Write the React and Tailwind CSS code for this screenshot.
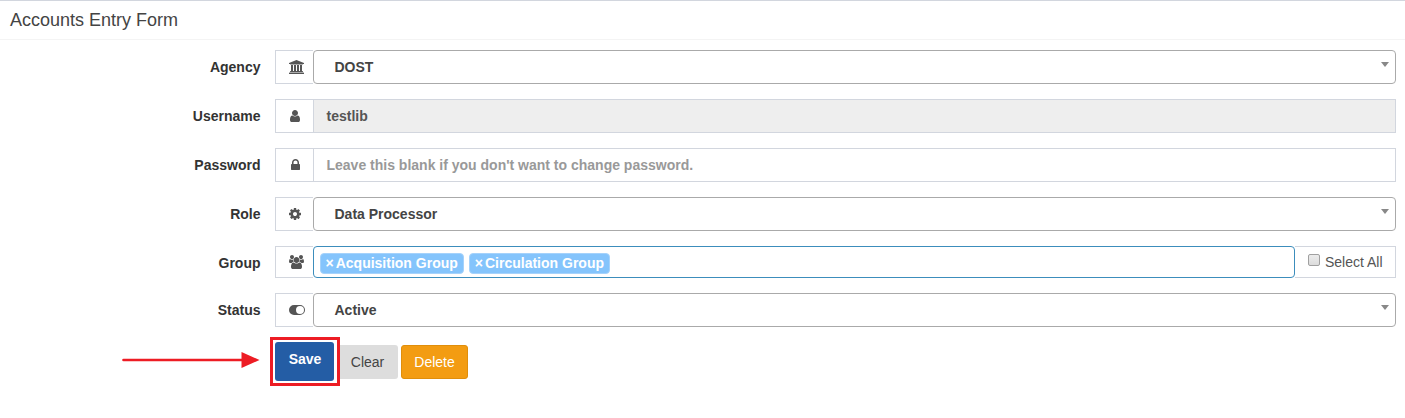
import React from 'react';

const PATHS = {
  university: {
    box: '0 0 1920 1792',
    w: 15,
    d: 'M960 0l960 384v128h-128q0 26-20.5 45t-48.5 19h-1526q-28 0-48.5-19t-20.5-45h-128v-128zM256 640h256v768h128v-768h256v768h128v-768h256v768h128v-768h256v768h59q28 0 48.5 19t20.5 45v64h-1664v-64q0-26 20.5-45t48.5-19h59v-768zM1851 1600q28 0 48.5 19t20.5 45v128h-1920v-128q0-26 20.5-45t48.5-19h1782z',
  },
  user: {
    box: '256 0 1280 1792',
    w: 10,
    d: 'M1536 1399q0 109-62.5 187t-150.5 78h-854q-88 0-150.5-78t-62.5-187q0-85 8.5-160.5t31.5-152 58.5-131 94-89 134.5-34.5q131 128 313 128t313-128q76 0 134.5 34.5t94 89 58.5 131 31.5 152 8.5 160.5zm-256-887q0 159-112.5 271.5t-271.5 112.5-271.5-112.5-112.5-271.5 112.5-271.5 271.5-112.5 271.5 112.5 112.5 271.5z',
  },
  lock: {
    box: '320 0 1152 1792',
    w: 9,
    d: 'M640 768h512v-192q0-106-75-181t-181-75-181 75-75 181v192zm832 96v576q0 40-28 68t-68 28h-960q-40 0-68-28t-28-68v-576q0-40 28-68t68-28h32v-192q0-184 132-316t316-132 316 132 132 316v192h32q40 0 68 28t28 68z',
  },
  cog: {
    box: '128 0 1536 1792',
    w: 12,
    d: 'M1152 896q0-106-75-181t-181-75-181 75-75 181 75 181 181 75 181-75 75-181zm512-109v222q0 12-8 23t-20 13l-185 28q-19 54-39 91 35 50 107 138 10 12 10 25t-9 23q-27 37-99 108t-94 71q-12 0-26-9l-138-108q-44 23-91 38-16 136-29 186-7 28-36 28h-222q-14 0-24.5-8.5t-11.5-21.5l-28-184q-49-16-90-37l-141 107q-10 9-25 9-14 0-25-11-126-114-165-168-7-10-7-23 0-12 8-23 15-21 51-66.5t54-70.5q-27-50-41-99l-183-27q-13-2-21-12.5t-8-23.5v-222q0-12 8-23t19-13l186-28q14-46 39-92-40-57-107-138-10-12-10-24 0-10 9-23 26-36 98.5-107.5t94.5-71.5q13 0 26 10l138 107q44-23 91-38 16-136 29-186 7-28 36-28h222q14 0 24.5 8.5t11.5 21.5l28 184q49 16 90 37l142-107q9-9 24-9 13 0 25 10 129 119 165 170 7 8 7 22 0 12-8 23-15 21-51 66.5t-54 70.5q26 50 41 98l183 28q13 2 21 12.5t8 23.5z',
  },
  users: {
    box: '-64 0 1920 1792',
    w: 15,
    d: 'M529 896q-162 5-265 128h-134q-82 0-138-40.5t-56-118.5q0-353 124-353 6 0 43.5 21t97.5 42.5 119 21.5q67 0 133-23-5 37-5 66 0 159 81 256zm1071 637q0 120-73 189.5t-194 69.5h-874q-121 0-194-69.5t-73-189.5q0-53 3.5-103.5t14-109 26.5-108.5 43-97.5 62-81 85.5-53.5 111.5-20q10 0 43 21.5t73 48 107 48 135 21.5 135-21.5 107-48 73-48 43-21.5q61 0 111.5 20t85.5 53.5 62 81 43 97.5 26.5 108.5 14 109 3.5 103.5zm-1024-1277q0 106-75 181t-181 75-181-75-75-181 75-181 181-75 181 75 75 181zm704 384q0 159-112.5 271.5t-271.5 112.5-271.5-112.5-112.5-271.5 112.5-271.5 271.5-112.5 271.5 112.5 112.5 271.5zm576 225q0 78-56 118.5t-138 40.5h-134q-103-123-265-128 81-97 81-256 0-29-5-66 66 23 133 23 59 0 119-21.5t97.5-42.5 43.5-21q124 0 124 353zm-128-609q0 106-75 181t-181 75-181-75-75-181 75-181 181-75 181 75 75 181z',
  },
  toggle: {
    box: '0 0 2048 1792',
    w: 16,
    d: 'M640 256h768a640 640 0 0 1 0 1280h-768a640 640 0 0 1 0-1280zM1408 384a512 512 0 1 0 0 1024a512 512 0 1 0 0-1024z',
  },
};

function Icon({ name }) {
  const { box, w, d } = PATHS[name];
  return (
    <svg width={w} height="14" viewBox={box} fill="#555" fillRule="evenodd" className={w > 14 ? 'ml-[0.6px] block shrink-0' : 'block shrink-0'}>
      <path d={d} />
    </svg>
  );
}

function Row({ label, icon, children, short }) {
  return (
    <div className={short ? 'flex h-8' : 'flex h-[34px]'}>
      <div className={short ? 'flex w-[260.5px] shrink-0 items-center justify-end pt-0.5 font-bold text-[#333]' : 'flex w-[260.5px] shrink-0 items-center justify-end font-bold text-[#333]'}>{label}</div>
      <div className="ml-[14.5px] flex w-[38px] shrink-0 items-center border border-r-0 border-[#d2d6de] pl-3">
        <span className="flex min-w-[14px] justify-center"><Icon name={icon} /></span>
      </div>
      {children}
    </div>
  );
}

function Select({ value }) {
  return (
    <div className="flex flex-1 justify-between rounded-[4px] border border-[#aaa] pr-1.5 pl-[20.5px]">
      <span className="self-center font-bold text-[#444]">{value}</span>
      <svg width="8" height="5" viewBox="0 0 8 5" className="mt-[11px]"><path d="M0 0h8l-4 5z" fill="#888" /></svg>
    </div>
  );
}

function Tag({ children }) {
  return (
    <span className="flex h-[21px] items-center rounded-[4px] border border-[#a5d2fb] bg-[#84c4fc] px-[5px] font-bold text-white">
      <span className="mr-0.5">×</span>
      {children}
    </span>
  );
}

export default function App() {
  return (
    <div className="h-[418px] overflow-hidden border-t border-[#d2d6de] bg-white font-['Liberation_Sans',Arial,sans-serif] text-[14px] leading-5">
      <header className="flex h-[39px] items-center border-b border-[#f4f4f4] pl-2.5 text-[18px] text-[#444]">Accounts Entry Form</header>
      <form className="flex flex-col gap-[15px] pt-2.5 pr-[9px]">
        <Row label="Agency" icon="university"><Select value="DOST" /></Row>
        <Row label="Username" icon="user">
          <div className="flex flex-1 items-center border border-[#d2d6de] bg-[#eee] pl-[12.5px] font-bold text-[#555]">testlib</div>
        </Row>
        <Row label="Password" icon="lock">
          <div className="flex flex-1 items-center border border-[#d2d6de] pl-[12.5px] font-bold text-[#999]">Leave this blank if you don't want to change password.</div>
        </Row>
        <Row label="Role" icon="cog"><Select value="Data Processor" /></Row>
        <Row label="Group" icon="users" short>
          <div className="flex flex-1 items-center gap-[5px] rounded-[4px] border border-[#3c8dbc] pt-0.5 pl-[5.5px]">
            <Tag>Acquisition Group</Tag>
            <Tag>Circulation Group</Tag>
          </div>
          <label className="flex w-[101px] items-center border border-l-0 border-[#d2d6de] pl-[13px] text-[#555]">
            <span className="mr-[5px] mb-1 size-3 shrink-0 rounded-[2px] border border-[#a0a0a0] bg-linear-to-b from-[#ececec] to-[#dcdcdc]" />
            Select All
          </label>
        </Row>
        <Row label="Status" icon="toggle"><Select value="Active" /></Row>
        <div className="-mt-[5px] flex">
          <svg width="138" height="20" viewBox="0 0 138 20" className="mt-[13px] ml-[122px] shrink-0">
            <path d="M1.5 10H121" stroke="#ed1c24" strokeWidth="2.6" strokeLinecap="round" />
            <path d="M119.500 2l18 8-18 8z" fill="#ed1c24" />
          </svg>
          <div className="z-10 ml-2.5 flex h-[49px] w-[70px] shrink-0 items-center border-[3px] border-[#ed1c24] bg-white pl-0.5">
            <button type="button" className="h-[39px] w-[59px] rounded-[3px] bg-[#245da5] pb-1.5 pl-px font-bold text-white">Save</button>
          </div>
          <button type="button" className="mt-2 -ml-1 h-[34px] w-[62px] rounded-[3px] bg-[#ddd] pl-px text-[#444]">Clear</button>
          <button type="button" className="mt-2 ml-[3px] h-[34px] w-[67px] rounded-[3px] border border-[#e08e0b] bg-[#f39c12] text-white">Delete</button>
        </div>
      </form>
    </div>
  );
}
